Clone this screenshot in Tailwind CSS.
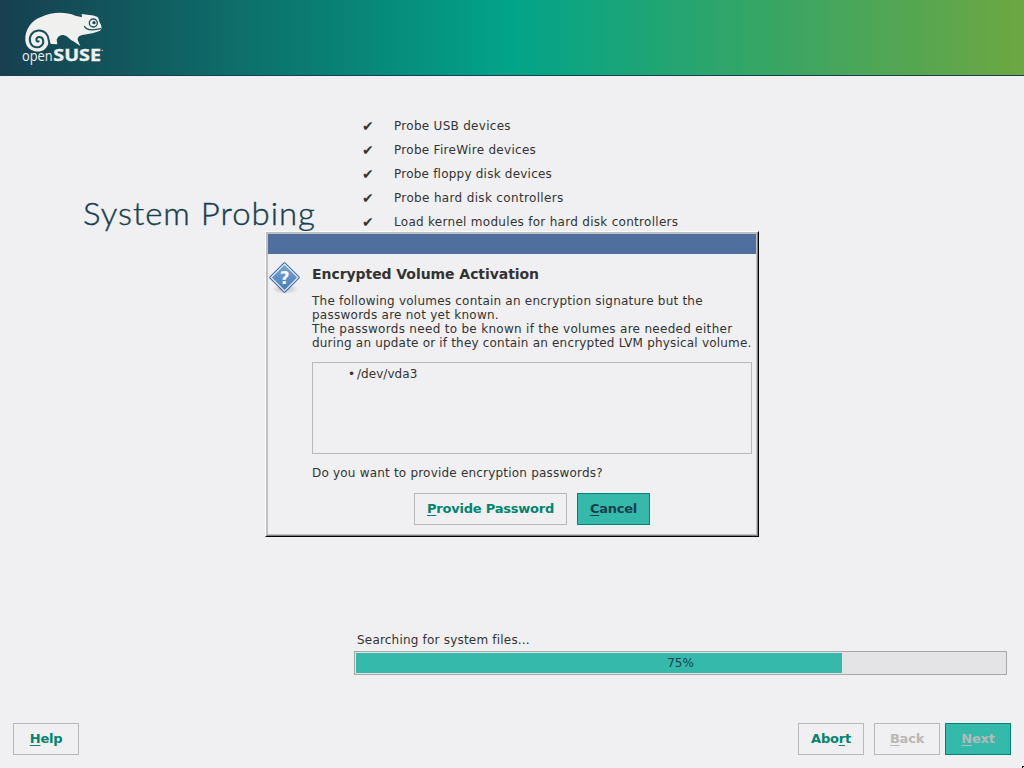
<!DOCTYPE html>
<html lang="en">
<head>
<meta charset="utf-8">
<title>System Probing</title>
<script src="https://cdn.jsdelivr.net/npm/@tailwindcss/browser@4"></script>
</head>
<body class="relative flex h-[768px] w-[1024px] flex-col overflow-hidden bg-[#f0f0f2] font-['DejaVu_Sans',sans-serif] text-[12px] leading-[14px] text-[#333333]">
<header class="h-[76px] shrink-0 border-b border-[#173f4f] bg-linear-to-r/srgb from-[#173f4f] via-[#02a489] to-[#6da741] pl-[10px]">
<svg class="h-[75px] w-[110px]" viewBox="0 0 330 225">
<path fill="#f0f0ee" d="M46 120C44 88 65 60 95 50C125 36 165 34 196 47L216 52L215 42C230 45 247 44 261 50C268 54 266 62 270 69C275 77 277 87 270 92C257 98 238 101 221 104C207 106 201 111 204 122L211 138L190 124C178 119 173 107 160 105C149 103 143 111 140 119L142 133L121 132L116 126C112 150 91 159 72 153C55 148 47 136 46 120Z"/>
<path fill="none" stroke="#1a5059" stroke-width="6" stroke-linecap="round" d="M121 134C114 127 119 112 108 100C95 87 74 89 64 103C55 117 60 137 75 141C90 145 103 134 99 119C95 108 80 109 79 119C79 124 83 126 86 124"/>
<circle cx="250" cy="69" r="12" fill="#f0f0ee" stroke="#1a5059" stroke-width="4"/>
<circle cx="252" cy="68" r="5" fill="#1a5059"/>
<path fill="none" stroke="#1a5059" stroke-width="4" d="M223 78C228 92 250 91 273 86"/>
<g fill="#f0f0ee">
<text x="36" y="184" font-family="Open Sans, sans-serif" font-size="42" textLength="92" lengthAdjust="spacingAndGlyphs">open</text>
<text x="130" y="184" font-family="Open Sans, sans-serif" font-weight="700" font-size="49" textLength="143" lengthAdjust="spacingAndGlyphs" stroke="#f0f0ee" stroke-width="1">SUSE</text>
<circle cx="277" cy="151" r="2"/>
</g>
</svg>
</header>
<main class="flex h-[616px] shrink-0">
<h1 class="w-[354px] shrink-0 whitespace-nowrap pl-[83px] pt-[117px] font-[Lato,sans-serif] text-[32px] font-light leading-[40px] tracking-[0.95px] text-[#173f4f] [-webkit-text-stroke:0.4px_#173f4f]"><span class="inline-block origin-left scale-x-[1.03]">System Probing</span></h1>
<section class="flex w-[653px] flex-col">
<ul class="mb-[401px] h-[156px] shrink-0 overflow-hidden pl-2 pt-[38px] tracking-[0.29px]">
<li class="flex h-6 items-center"><span class="w-8 text-[14px]">✔</span>Probe USB devices</li>
<li class="flex h-6 items-center"><span class="w-8 text-[14px]">✔</span>Probe FireWire devices</li>
<li class="flex h-6 items-center"><span class="w-8 text-[14px]">✔</span><span class="tracking-[0.22px]">Probe floppy disk devices</span></li>
<li class="flex h-6 items-center"><span class="w-8 text-[14px]">✔</span><span class="tracking-[0.34px]">Probe hard disk controllers</span></li>
<li class="flex h-6 items-center"><span class="w-8 text-[14px]">✔</span>Load kernel modules for hard disk controllers</li>
</ul>
<p class="shrink-0 pl-[3px] tracking-[0.2px]">Searching for system files...</p>
<div class="mt-[4px] grid h-6 shrink-0 border border-[#a7a7a7] bg-[#e4e4e6] p-px">
<div class="col-start-1 row-start-1 w-[486px] bg-[#35b9ab]"></div>
<span class="col-start-1 row-start-1 self-center text-center text-[#173f4f]">75%</span>
</div>
</section>
</main>
<footer class="flex h-[76px] px-[13px] pt-[31px] text-[13px] font-bold tracking-[-0.22px] text-[#008570]">
<button class="h-8 w-[66px] border border-[#b8b8ba]"><span class="underline decoration-1 underline-offset-2">H</span>elp</button>
<button class="ml-auto h-8 w-[66px] border border-[#b8b8ba]">Abo<span class="underline decoration-1 underline-offset-2">r</span>t</button>
<button class="ml-[10px] h-8 w-[66px] border border-[#b8b8ba] text-[#b8b8b8]"><span class="underline decoration-1 underline-offset-2">B</span>ack</button>
<button class="ml-[5px] h-8 w-[66px] border border-[#008570] bg-[#35b9ab] text-[#b8b8b8]"><span class="underline decoration-1 underline-offset-2">N</span>ext</button>
</footer>

<div role="dialog" class="absolute left-[265px] top-[231px] h-[306px] w-[494px] border border-b-black border-l-white border-r-black border-t-white bg-[#f0f0f2]">
<div class="h-full border border-b-[#808080] border-l-[#c0c0c0] border-r-[#808080] border-t-[#c0c0c0]">
<div class="flex h-full flex-col border border-[#c0c0c0]">
<div class="h-5 shrink-0 bg-[#4f6f9f]"></div>
<div class="flex">
<div class="w-11 shrink-0 pt-[6px]">
<svg class="h-[36px] w-[34px]" viewBox="0 0 34 36">
<defs><linearGradient id="d" x1="0" y1="0" x2="0" y2="1"><stop stop-color="#7aa5d8"/><stop offset="1" stop-color="#487ab8"/></linearGradient>
<radialGradient id="s"><stop stop-color="#777" stop-opacity=".5"/><stop offset="1" stop-color="#777" stop-opacity="0"/></radialGradient></defs>
<ellipse cx="17" cy="29" rx="13" ry="5" fill="url(#s)"/>
<path d="M15.4 2.7Q16.5 1.7 17.6 2.7L31.3 16.4Q32.3 17.5 31.3 18.6L17.6 32.3Q16.5 33.3 15.4 32.3L1.7 18.6Q.7 17.5 1.7 16.4Z" fill="#3c68a8"/>
<path d="M16.5 4L30 17.5L16.5 31L3 17.5Z" fill="url(#d)" stroke="#e6eef8" stroke-width="1.2"/>
<text x="16.7" y="23.5" text-anchor="middle" font-family="DejaVu Sans, sans-serif" font-weight="700" font-size="17" fill="#fff">?</text>
</svg>
</div>
<div class="flex w-[440px] flex-col">
<h2 class="mt-[12px] text-[14px] font-bold leading-4 tracking-[-0.06px]">Encrypted Volume Activation</h2>
<p class="mt-[12px] whitespace-nowrap tracking-[0.22px]">The following volumes contain an encryption signature but the<br><span class="tracking-[0.25px]">passwords are not yet known.</span><br><span class="tracking-[0.3px]">The passwords need to be known if the volumes are needed either</span><br><span class="tracking-[0.19px]">during an update or if they contain an encrypted LVM physical volume.</span></p>
<div class="mt-3 flex h-[92px] gap-[3px] border border-[#b8b8ba] pl-[35px] pt-[4px] tracking-[0.05px]"><span class="w-[6px]">•</span><span>/dev/vda3</span></div>
<p class="mt-3 tracking-[0.2px]">Do you want to provide encryption passwords?</p>
<div class="mt-[13px] flex justify-center gap-[10px] text-[13px] font-bold tracking-[-0.22px] text-[#008570]">
<button class="h-8 w-[153px] border border-[#b8b8ba]"><span class="underline decoration-1 underline-offset-2">P</span>rovide Password</button>
<button class="h-8 w-[73px] border border-[#008570] bg-[#35b9ab] text-[#173f4f]"><span class="underline decoration-1 underline-offset-2">C</span>ancel</button>
</div>
</div>
</div>
</div>
</div>
</div>
<div class="absolute bottom-0 right-0 size-[2px] border-l border-t border-black"></div>
</body>
</html>
